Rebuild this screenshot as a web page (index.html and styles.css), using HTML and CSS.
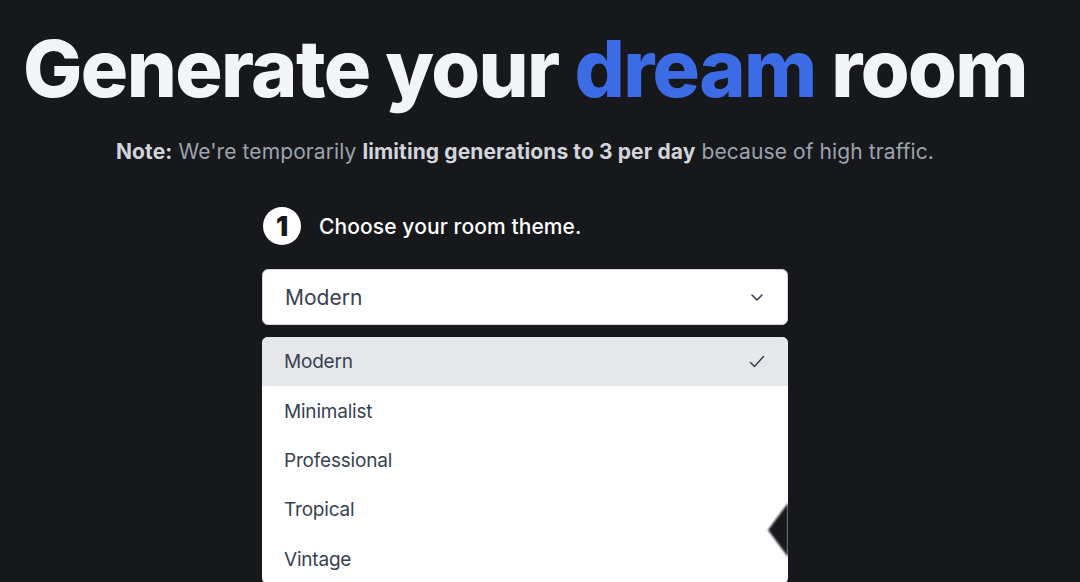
FILE: index.html
```html
<!DOCTYPE html>
<html>
<head>
<meta charset="utf-8">
<link rel="stylesheet" href="styles.css">
</head>
<body>
<main class="page">
  <h1 class="title">Generate your <span class="accent">dream</span> room</h1>
  <p class="note"><b>Note:</b> We're temporarily <b>limiting generations to 3 per day</b> because of high traffic.</p>
  <section class="form">
    <div class="step">
      <span class="step-num">1</span>
      <span class="step-label">Choose your room theme.</span>
    </div>
    <div class="select">
      <span>Modern</span>
      <svg class="chev" width="16" height="16" viewBox="0 0 16 16"><path d="M3 6l5 5 5-5" fill="none" stroke="#374151" stroke-width="1.6" stroke-linecap="round" stroke-linejoin="round"/></svg>
    </div>
    <ul class="menu">
      <li class="item active"><span>Modern</span>
        <svg width="18" height="18" viewBox="0 0 18 18"><path d="M2.5 9.5l4 4 9-10" fill="none" stroke="#374151" stroke-width="1.5" stroke-linecap="round" stroke-linejoin="round"/></svg>
      </li>
      <li class="item">Minimalist</li>
      <li class="item">Professional</li>
      <li class="item">Tropical</li>
      <li class="item">Vintage</li>
      <span class="notch"></span>
    </ul>
  </section>
</main>
</body>
</html>
```

FILE: styles.css
```css
html, body {
  margin: 0;
  padding: 0;
  background: #17181c;
  height: 582px;
  overflow: hidden;
}
.page {
  width: 1050px;
  display: flex;
  flex-direction: column;
  align-items: center;
  font-family: Inter, "Noto Sans", sans-serif;
}
.title {
  margin: 22px 0 0;
  font-size: 79px;
  font-weight: 800;
  letter-spacing: -1.6px;
  line-height: 92px;
  color: #f3f4f6;
  white-space: nowrap;
}
.accent { color: #3b6ce6; }
.note {
  margin: 24px 0 0;
  font-size: 21px;
  color: #9ca3af;
  line-height: 28px;
  letter-spacing: 0.1px;
}
.note b { color: #d1d5db; font-weight: 700; }
.form {
  width: 526px;
  margin-top: 40px;
  display: flex;
  flex-direction: column;
}
.step {
  display: flex;
  align-items: center;
  gap: 18px;
  height: 40px;
  padding-left: 1px;
}
.step-num {
  width: 38px;
  height: 38px;
  border-radius: 50%;
  background: #fff;
  color: #17181c;
  font-weight: 900;
  font-size: 27px;
  display: flex;
  align-items: center;
  justify-content: center;
}
.step-label {
  color: #fff;
  font-size: 21px;
  font-weight: 500;
  letter-spacing: 0.1px;
}
.select {
  margin-top: 23px;
  height: 56px;
  box-sizing: border-box;
  background: #fff;
  border: 1px solid #d1d5db;
  border-radius: 6px;
  display: flex;
  align-items: center;
  justify-content: space-between;
  padding: 0 22px 0 22px;
  font-size: 21px;
  color: #374151;
}
.menu {
  position: relative;
  list-style: none;
  margin: 12px 0 0;
  padding: 0;
  background: #fff;
  border-radius: 6px;
  overflow: hidden;
}
.item {
  height: 49.4px;
  display: flex;
  align-items: center;
  justify-content: space-between;
  padding: 0 22px 0 22px;
  font-size: 19px;
  letter-spacing: -0.2px;
  color: #374151;
}
.item.active { background: #e5e7eb; }
.notch {
  position: absolute;
  right: 0;
  top: 166px;
  width: 0;
  height: 0;
  border-top: 27px solid transparent;
  border-bottom: 27px solid transparent;
  border-right: 20px solid #17181c;
  filter: blur(1px);
}
```
